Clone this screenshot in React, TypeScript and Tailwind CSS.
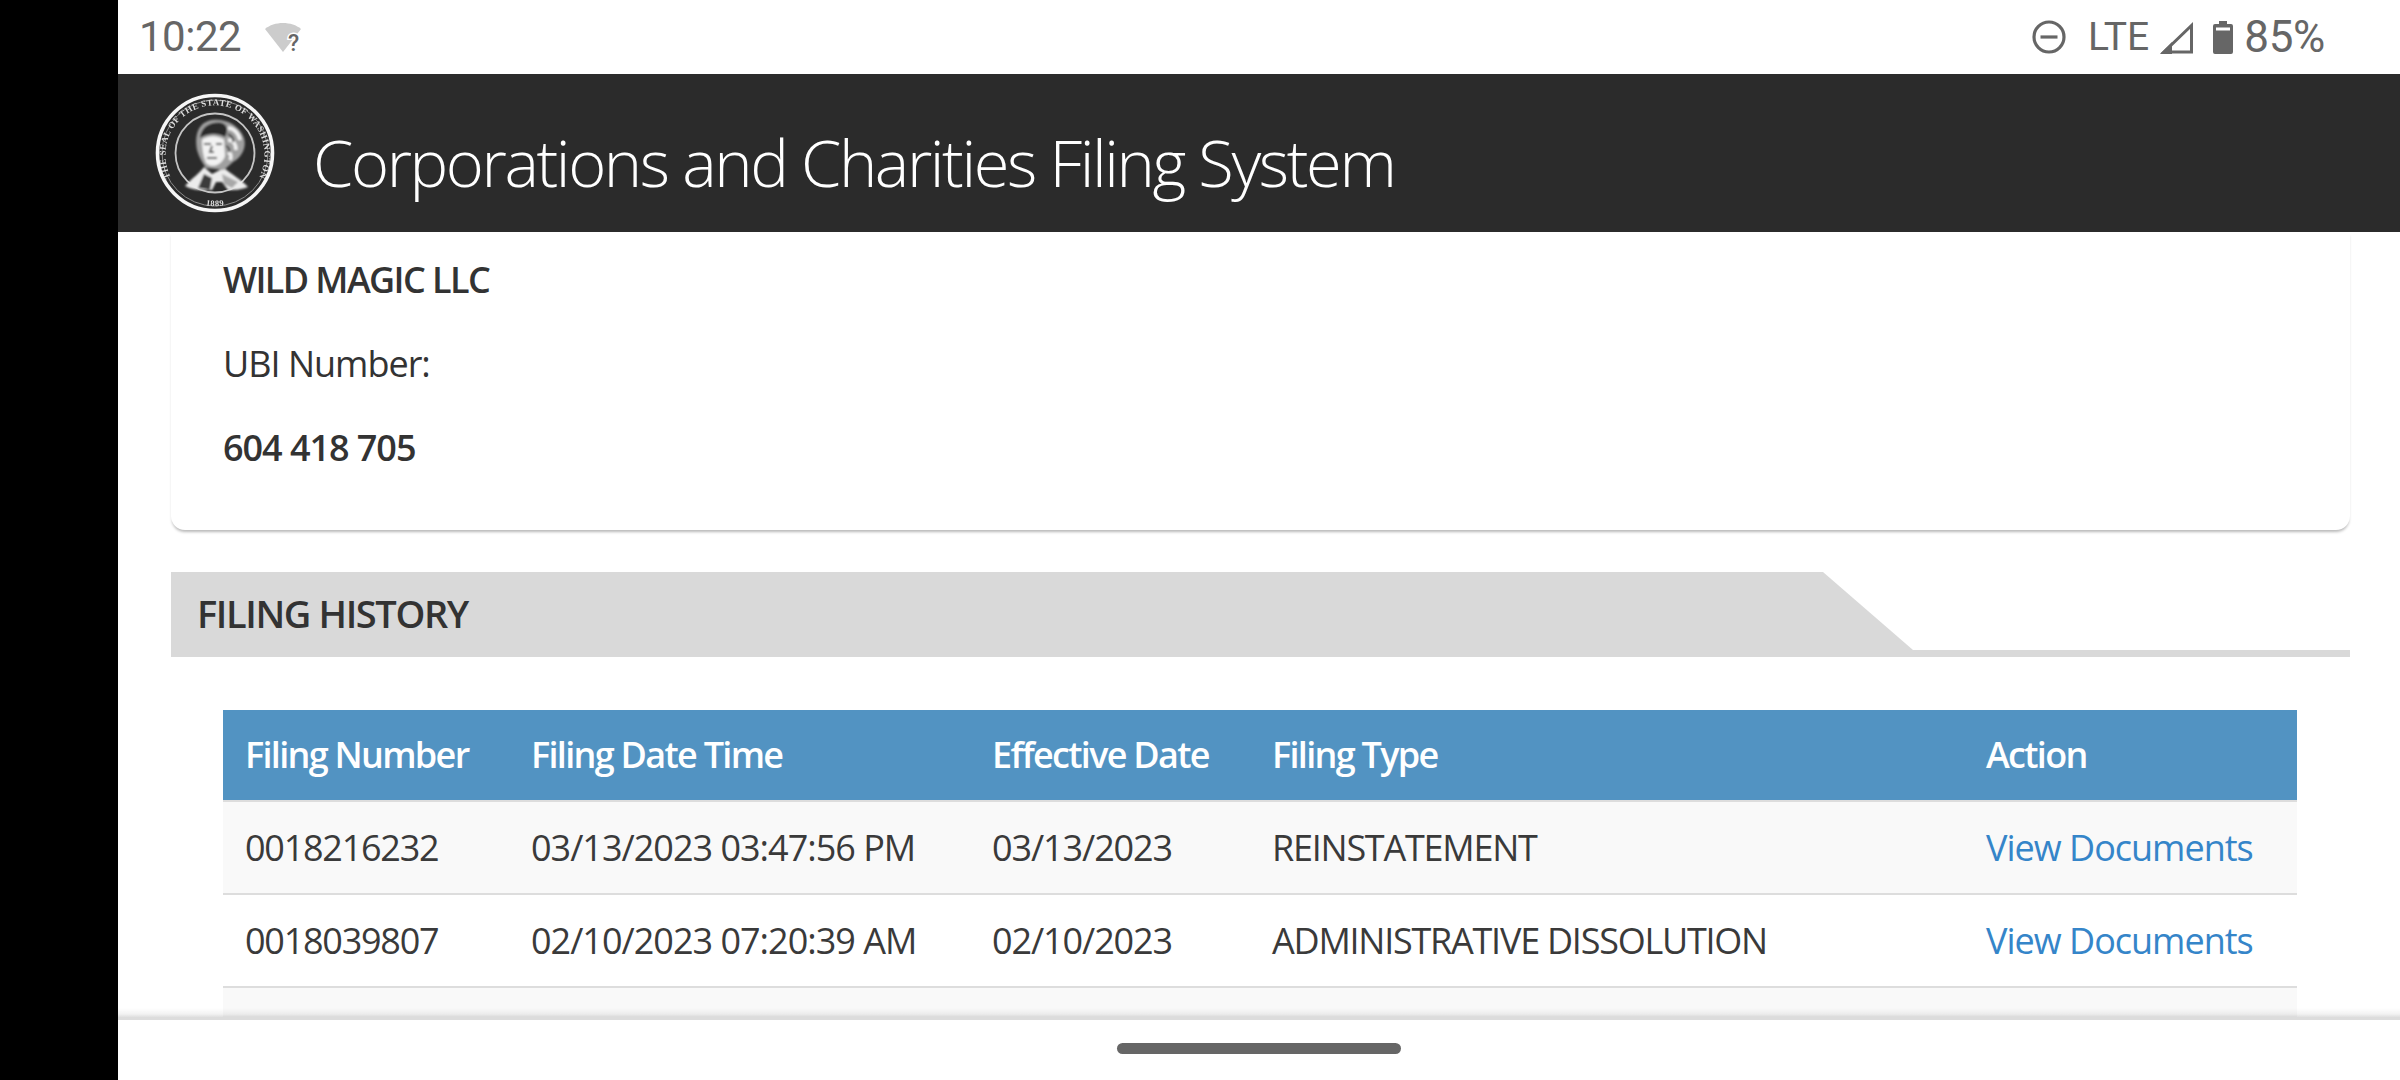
const rows = [
  ["0018216232", "03/13/2023 03:47:56 PM", "03/13/2023", "REINSTATEMENT"],
  ["0018039807", "02/10/2023 07:20:39 AM", "02/10/2023", "ADMINISTRATIVE DISSOLUTION"],
];

const cellTracking = ["tracking-[-1.25px]", "tracking-[-1px]", "tracking-[-1.1px]", "tracking-[-1.25px]"];

function Seal() {
  return (
    <svg width="126" height="126" viewBox="0 0 126 126" className="shrink-0">
      <defs>
        <path id="sealTop" d="M 23 94 A 49.5 49.5 0 1 1 103 94" />
        <path id="sealBottom" d="M 30 105 A 54 54 0 0 0 96 105" />
        <filter id="sealBlur" x="-5%" y="-5%" width="110%" height="110%">
          <feGaussianBlur stdDeviation="0.6" />
        </filter>
        <filter id="faceBlur" x="-5%" y="-5%" width="110%" height="110%">
          <feGaussianBlur stdDeviation="0.9" />
        </filter>
      </defs>
      <g filter="url(#sealBlur)">
        <circle cx="63" cy="63" r="57.5" fill="none" stroke="#f6f6f6" strokeWidth="3.6" />
        <circle cx="63" cy="63" r="53" fill="none" stroke="#8a8a8a" strokeWidth="1" />
        <circle cx="63" cy="63" r="39.5" fill="none" stroke="#c4c4c4" strokeWidth="1.8" />
        <text fill="#dddddd" fontSize="9" fontWeight="700" fontFamily="'Liberation Serif', serif" letterSpacing="0.35">
          <textPath href="#sealTop" startOffset="50%" textAnchor="middle">THE SEAL OF THE STATE OF WASHINGTON</textPath>
        </text>
        <text fill="#dddddd" fontSize="8.5" fontWeight="700" fontFamily="'Liberation Serif', serif" letterSpacing="0.4">
          <textPath href="#sealBottom" startOffset="50%" textAnchor="middle">1889</textPath>
        </text>
      </g>
      <g filter="url(#faceBlur)">
        <path d="M33 96 C40 88 47 84 52 77 L60 84 L72 78 C79 84 90 90 96 97 C88 100 82 100 76 100 L70 92 L64 92 L60 100 C50 101 40 100 33 96Z" fill="#ececec" />
        <path d="M52 84 L60 88 L58 100 L46 98Z" fill="#3a3a3a" />
        <path d="M70 84 L86 92 L80 98 L72 94Z" fill="#a8a8a8" />
        <path d="M45 60 C42 44 47 32 60 30 C72 28 87 34 92 48 C95 58 89 68 81 72 L72 80 L54 78 C50 72 47 67 45 60Z" fill="#a0a0a0" />
        <path d="M48 48 C49 36 60 31 70 33 C76 35 76 42 73 47 C66 43 56 43 48 48Z" fill="#2b2b2b" />
        <path d="M50 50 C56 45 66 45 72 50 L73 66 C70 75 60 79 54 73 C51 66 50 58 50 50Z" fill="#f2f2f2" />
        <path d="M52 54 H59 M64 54 H70 M60 56 L58 62 H62 M55 68 H65" stroke="#555555" strokeWidth="2" fill="none" />
        <path d="M76 38 C82 38 87 44 88 50 M76 50 C82 50 84 55 84 60 M76 62 C79 64 80 66 78 70" stroke="#f4f4f4" strokeWidth="3.4" fill="none" />
        <path d="M76 44 C80 46 82 48 81 52 M74 56 C77 57 78 60 77 62" stroke="#333333" strokeWidth="1.8" fill="none" />
      </g>
    </svg>
  );
}

function Th({ children }: { children: string }) {
  return <th className="px-[22px] text-left text-[36px] font-semibold tracking-[-1.7px] text-white">{children}</th>;
}

export default function App() {
  return (
    <div className="flex h-[1080px] w-[2400px] overflow-hidden bg-black font-['Open_Sans',sans-serif]">
      <div className="w-[118px] shrink-0 bg-black" />
      <div className="flex min-w-0 flex-1 flex-col bg-white">
        <div className="flex h-[74px] shrink-0 items-center justify-between pl-[21px] pr-[75px] font-['Roboto',sans-serif] text-[#666666]">
          <div className="flex items-center gap-[24px]">
            <span className="text-[42px] leading-none tracking-[-0.5px]">10:22</span>
            <svg width="38" height="36" viewBox="0 0 38 36" className="mt-[7px]">
              <path d="M0 6 C9 -2 27 -2 36 6 L18 29Z" fill="#cccccc" />
              <text x="23" y="28" fontSize="23" fontWeight="500" fontFamily="Roboto, sans-serif" fill="#666666" stroke="#ffffff" strokeWidth="3" paintOrder="stroke">?</text>
            </svg>
          </div>
          <div className="flex items-center">
            <svg width="34" height="34" viewBox="0 0 34 34">
              <circle cx="17" cy="17" r="15" fill="none" stroke="#666666" strokeWidth="3.2" />
              <path d="M8.5 17 H25.5" stroke="#666666" strokeWidth="3.2" />
            </svg>
            <span className="ml-[22px] text-[39px] leading-none">LTE</span>
            <svg width="34" height="33" viewBox="0 0 34 33" className="ml-[11px]">
              <path d="M31.5 4.5 V31 H4 Z" fill="none" stroke="#666666" strokeWidth="3" />
              <path d="M0 33 L12 21 V33Z" fill="#666666" />
            </svg>
            <svg width="20" height="33" viewBox="0 0 20 33" className="ml-[19px]">
              <path d="M6 0 H14 V3 H18 A2 2 0 0 1 20 5 V31 A2 2 0 0 1 18 33 H2 A2 2 0 0 1 0 31 V5 A2 2 0 0 1 2 3 H6Z" fill="#666666" />
              <rect x="3" y="6.5" width="14" height="3" fill="#ffffff" />
            </svg>
            <span className="ml-[11px] text-[44px] leading-none tracking-[-0.3px]">85%</span>
          </div>
        </div>

        <header className="flex h-[158px] shrink-0 items-center bg-[#2b2b2b] pl-[34px]">
          <Seal />
          <h1 className="ml-[35px] mt-[18px] text-[65px] font-[350] leading-none tracking-[-2.4px] text-white">Corporations and Charities Filing System</h1>
        </header>

        <main className="relative min-h-0 flex-1 overflow-hidden pl-[53px] pr-[50px] text-[#333333]">
          <section className="h-[298px] rounded-b-[14px] px-[52px] pt-[23px] shadow-[0_3px_3px_-1px_rgba(0,0,0,0.28)]">
            <p className="text-[36px] font-semibold leading-[50px] tracking-[-1.6px]">WILD MAGIC LLC</p>
            <p className="mt-[34px] text-[36px] leading-[50px] tracking-[-1px]">UBI Number:</p>
            <p className="mt-[34px] text-[36px] font-semibold leading-[50px] tracking-[-1.05px]">604 418 705</p>
          </section>

          <div className="relative mt-[42px] h-[85px]">
            <div className="h-[78px] bg-[#d9d9d9] pl-[26px] pt-[16px] text-[38px] font-semibold leading-[50px] tracking-[-1.4px] [clip-path:polygon(0_0,1652px_0,1742px_100%,0_100%)]">FILING HISTORY</div>
            <div className="h-[7px] bg-[#d9d9d9]" />
          </div>

          <div className="ml-[52px] mr-[53px] mt-[53px]">
            <table className="w-full table-fixed border-collapse">
              <colgroup>
                <col className="w-[286px]" />
                <col className="w-[461px]" />
                <col className="w-[280px]" />
                <col className="w-[714px]" />
                <col className="w-[333px]" />
              </colgroup>
              <thead>
                <tr className="h-[91px] border-b-2 border-[#dddddd] bg-[#5293c2]">
                  <Th>Filing Number</Th>
                  <Th>Filing Date Time</Th>
                  <Th>Effective Date</Th>
                  <Th>Filing Type</Th>
                  <Th>Action</Th>
                </tr>
              </thead>
              <tbody className="text-[36px] text-[#3a3a3a]">
                {rows.map((r, i) => (
                  <tr key={r[0]} className={`h-[93px] border-b-2 border-[#dddddd] ${i === 0 ? "bg-[#f9f9f9]" : "bg-white"}`}>
                    {r.map((c, j) => (
                      <td key={c} className={`whitespace-nowrap px-[22px] ${cellTracking[j]}`}>{c}</td>
                    ))}
                    <td className="whitespace-nowrap px-[22px] tracking-[-1px] text-[#3585c9]">View Documents</td>
                  </tr>
                ))}
                <tr className="h-[93px] bg-[#f9f9f9]"><td colSpan={5} /></tr>
              </tbody>
            </table>
          </div>

          <div className="absolute inset-x-0 bottom-0 h-[12px] bg-gradient-to-b from-transparent via-[rgba(0,0,0,0.05)] to-[rgba(0,0,0,0.2)]" />
          <div className="absolute inset-x-0 bottom-0 h-[3px] bg-[#dcdcdc]" />
        </main>

        <nav className="flex h-[60px] shrink-0 justify-center bg-white pt-[23px]">
          <div className="h-[11px] w-[284px] rounded-full bg-[#666666]" />
        </nav>
      </div>
    </div>
  );
}
